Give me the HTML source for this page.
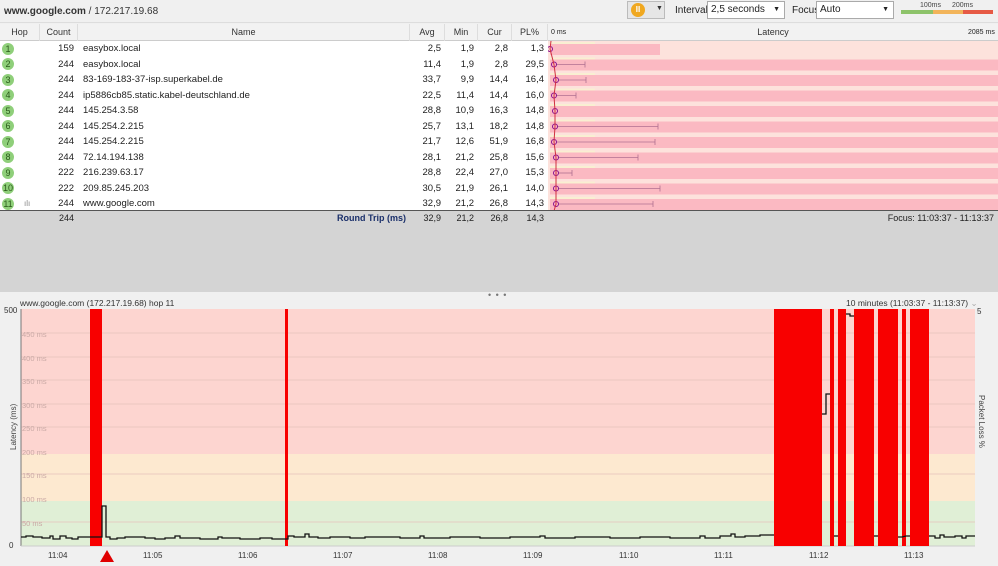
<!DOCTYPE html>
<html><head><meta charset="utf-8"><style>
*{box-sizing:border-box;margin:0;padding:0}
body{width:998px;height:566px;overflow:hidden;background:#f0f0f0;font-family:"Liberation Sans",sans-serif;font-size:9.5px;color:#222;position:relative}
.a{position:absolute}
.hdr{top:24px;height:17px;left:0;width:998px;background:#f2f2f2;border-bottom:1px solid #ccc;font-size:9px}
.hc{position:absolute;top:0;height:17px;line-height:17px;text-align:center;border-right:1px solid #ddd;color:#333}
.row{position:absolute;left:0;width:548px;height:15.5px;line-height:15.5px;background:#fff}
.row span{position:absolute;top:0}
.r{text-align:right}
.badge{position:absolute;left:2px;top:1.5px;width:12px;height:12px;border-radius:50%;background:#8fcf7a;color:#2a5a1a;font-size:9px;line-height:12px;text-align:center}
</style></head><body>
<div class="a" style="top:0;left:0;width:998px;height:23px;background:#f0f0f0;border-bottom:1px solid #ddd"></div>
<div class="a" style="top:6px;left:4px;font-size:10px;color:#333"><b>www.google.com</b> / 172.217.19.68</div>
<div class="a" style="top:1px;left:627px;width:38px;height:18px;border:1px solid #bbb;background:#e6e6e6"></div>
<div class="a" style="top:3px;left:631px;width:14px;height:14px;border-radius:50%;background:#f0a820;color:#fff;font-size:8px;line-height:14px;text-align:center;font-weight:bold">II</div>
<div class="a" style="top:5px;left:656px;font-size:7px;color:#333">▼</div>
<div class="a" style="top:5px;left:675px;font-size:10px">Interval</div>
<div class="a" style="top:1px;left:707px;width:78px;height:18px;border:1px solid #aaa;background:#fff;font-size:10px;line-height:16px;padding-left:3px">2,5 seconds<span style="position:absolute;right:4px;font-size:7px">▼</span></div>
<div class="a" style="top:5px;left:792px;font-size:10px">Focus</div>
<div class="a" style="top:1px;left:816px;width:78px;height:18px;border:1px solid #aaa;background:#fff;font-size:10px;line-height:16px;padding-left:3px">Auto<span style="position:absolute;right:4px;font-size:7px">▼</span></div>
<div class="a" style="top:2px;left:920px;font-size:7px;color:#444">100ms</div>
<div class="a" style="top:2px;left:952px;font-size:7px;color:#444">200ms</div>
<div class="a" style="top:10px;left:901px;width:32px;height:4px;background:#8dc36a"></div>
<div class="a" style="top:10px;left:933px;width:30px;height:4px;background:#f2b45a"></div>
<div class="a" style="top:10px;left:963px;width:30px;height:4px;background:#e65a45"></div>

<div class="a hdr">
<div class="hc" style="left:0;width:40px">Hop</div>
<div class="hc" style="left:40px;width:38px">Count</div>
<div class="hc" style="left:78px;width:332px">Name</div>
<div class="hc" style="left:410px;width:35px">Avg</div>
<div class="hc" style="left:445px;width:33px">Min</div>
<div class="hc" style="left:478px;width:34px">Cur</div>
<div class="hc" style="left:512px;width:36px">PL%</div>
<div class="hc" style="left:548px;width:450px;border:none">Latency</div>
<div class="a" style="left:551px;top:0;font-size:7px;line-height:17px">0 ms</div>
<div class="a" style="left:968px;top:0;font-size:7px;line-height:17px">2085 ms</div>
</div>

<div class="a" style="top:41px;left:548px;width:450px;height:170px;background:#fde2dc"></div>
<svg class="a" style="top:41px;left:548px" width="450" height="170">
<g id="rows"></g>
</svg>
<div id="tbl"></div>

<div class="a" style="top:210px;left:0;width:998px;height:1px;background:#555"></div>
<div class="a" style="top:211px;left:0;width:998px;height:81px;background:#d4d4d4"></div>
<div class="a" style="top:211px;left:0;width:998px;height:15px;line-height:14px;font-size:9px">
<span class="a r" style="left:40px;width:34px">244</span>
<span class="a r" style="left:300px;width:106px;color:#1a2f6a;font-weight:bold">Round Trip (ms)</span>
<span class="a r" style="left:410px;width:31px">32,9</span>
<span class="a r" style="left:445px;width:29px">21,2</span>
<span class="a r" style="left:478px;width:30px">26,8</span>
<span class="a r" style="left:512px;width:32px">14,3</span>
<span class="a r" style="left:800px;width:194px">Focus: 11:03:37 - 11:13:37</span>
</div>
<div class="a" style="top:290px;left:488px;font-size:9px;color:#777;letter-spacing:1px">• • •</div>
<div class="a" style="top:298px;left:20px;font-size:8.5px;color:#333">www.google.com (172.217.19.68) hop 11</div>
<div class="a" style="top:298px;left:846px;font-size:8.5px;color:#333">10 minutes (11:03:37 - 11:13:37) <span style="color:#aaa">⌄</span></div>

<svg class="a" style="top:300px;left:0" width="998" height="266">
<rect x="21" y="9" width="954" height="145" fill="#fdd5d0"/>
<rect x="21" y="154" width="954" height="47" fill="#fde9d0"/>
<rect x="21" y="201" width="954" height="45" fill="#e0efd6"/>
<g stroke="#e6c0bc" stroke-width="0.7">
<line x1="21" x2="975" y1="33" y2="33"/><line x1="21" x2="975" y1="57" y2="57"/><line x1="21" x2="975" y1="80" y2="80"/><line x1="21" x2="975" y1="104" y2="104"/><line x1="21" x2="975" y1="127" y2="127"/><line x1="21" x2="975" y1="174" y2="174"/><line x1="21" x2="975" y1="222" y2="222"/></g>
<g font-size="7.5" fill="#c9a9a5" font-family="Liberation Sans">
<text x="22" y="37">450 ms</text><text x="22" y="61">400 ms</text><text x="22" y="84">350 ms</text><text x="22" y="108">300 ms</text><text x="22" y="131">250 ms</text><text x="22" y="155">200 ms</text><text x="22" y="178">150 ms</text><text x="22" y="202">100 ms</text><text x="22" y="226">50 ms</text></g>
<line x1="21" y1="9" x2="21" y2="246" stroke="#777"/>
<line x1="21" y1="246" x2="975" y2="246" stroke="#ccc"/>
<text x="4" y="13" font-size="8" fill="#333" font-family="Liberation Sans">500</text>
<text x="9" y="248" font-size="8" fill="#333" font-family="Liberation Sans">0</text>
<text x="977" y="14" font-size="8" fill="#333" font-family="Liberation Sans">5</text>
<text transform="translate(16,150) rotate(-90)" font-size="8" fill="#444" font-family="Liberation Sans">Latency (ms)</text>
<text transform="translate(979,95) rotate(90)" font-size="8" fill="#444" font-family="Liberation Sans">Packet Loss %</text>
<g fill="#f80000">
<rect x="90" y="9" width="12" height="237"/><rect x="285" y="9" width="3" height="237"/>
<rect x="774" y="9" width="48" height="237"/><rect x="830" y="9" width="4" height="237"/><rect x="838" y="9" width="8" height="237"/><rect x="854" y="9" width="20" height="237"/><rect x="878" y="9" width="20" height="237"/><rect x="902" y="9" width="4" height="237"/><rect x="910" y="9" width="19" height="237"/>
</g>
<polyline fill="none" stroke="#111" stroke-width="1.3" points="21,237 26,237 26,236 33,236 33,237 42,237 42,238 50,238 50,236 53,236 53,239 60,239 60,236 66,236 66,238 72,238 72,239 78,239 78,237 90,237 102,237 102,206 106,206 106,237 110,237 110,239 117,239 117,238 125,238 125,237 145,237 145,238 155,238 155,239 165,239 165,238 175,238 175,236 180,236 180,238 200,238 200,239 218,239 218,237 222,237 222,238 240,238 240,239 260,239 260,238 272,238 272,239 285,239 288,239 288,236 294,236 294,237 305,237 305,234 309,234 309,237 318,237 318,238 330,238 330,237 350,237 350,238 365,238 365,237 400,237 400,238 420,238 420,236 424,236 424,238 450,238 450,237 480,237 480,238 510,238 510,237 540,237 540,236 545,236 545,238 575,238 575,237 610,237 610,238 640,238 640,237 670,237 670,238 700,238 700,236 705,236 705,238 720,238 720,236 731,236 731,234 735,234 735,237 745,237 745,236 760,236 760,235 774,235 774,235"/>
<polyline fill="none" stroke="#111" stroke-width="1.3" points="822,114 826,114 826,94 830,94"/>
<polyline fill="none" stroke="#111" stroke-width="1.3" points="846,14 850,14 850,16 854,16"/>
<polyline fill="none" stroke="#111" stroke-width="1.3" points="834,236 838,236"/>
<polyline fill="none" stroke="#111" stroke-width="1.3" points="874,236 878,236"/>
<polyline fill="none" stroke="#111" stroke-width="1.3" points="898,237 902,237 906,236 910,236"/>
<polyline fill="none" stroke="#111" stroke-width="1.3" points="929,236 935,236 935,238 940,238 940,235 944,235 944,237 955,237 955,236 962,236 962,238 966,238 966,236 975,236"/>
<g font-size="8" fill="#333" font-family="Liberation Sans">
<text x="48" y="258">11:04</text><text x="143" y="258">11:05</text><text x="238" y="258">11:06</text><text x="333" y="258">11:07</text><text x="428" y="258">11:08</text><text x="523" y="258">11:09</text><text x="619" y="258">11:10</text><text x="714" y="258">11:11</text><text x="809" y="258">11:12</text><text x="904" y="258">11:13</text></g>
<polygon points="100,262 107,250 114,262" fill="#e00000"/>
</svg>

<script>
var d=[[1,159,"easybox.local","2,5","1,9","2,8","1,3",0,0],
[2,244,"easybox.local","11,4","1,9","2,8","29,5",4,37],
[3,244,"83-169-183-37-isp.superkabel.de","33,7","9,9","14,4","16,4",6,38],
[4,244,"ip5886cb85.static.kabel-deutschland.de","22,5","11,4","14,4","16,0",4,28],
[5,244,"145.254.3.58","28,8","10,9","16,3","14,8",5,0],
[6,244,"145.254.2.215","25,7","13,1","18,2","14,8",5,110],
[7,244,"145.254.2.215","21,7","12,6","51,9","16,8",4,107],
[8,244,"72.14.194.138","28,1","21,2","25,8","15,6",6,90],
[9,222,"216.239.63.17","28,8","22,4","27,0","15,3",6,24],
[10,222,"209.85.245.203","30,5","21,9","26,1","14,0",6,112],
[11,244,"www.google.com","32,9","21,2","26,8","14,3",6,105]];
var h="",s="";
d.forEach(function(r,i){var y=41+i*15.5;
h+='<div class="row" style="top:'+y+'px"><div class="badge">'+r[0]+'</div>'+(i==10?'<span style="left:24px;color:#888;font-size:8px">ılı</span>':'')+
'<span class="r" style="left:40px;width:34px">'+r[1]+'</span><span style="left:83px">'+r[2]+'</span><span class="r" style="left:410px;width:31px">'+r[3]+'</span><span class="r" style="left:445px;width:29px">'+r[4]+'</span><span class="r" style="left:478px;width:30px">'+r[5]+'</span><span class="r" style="left:512px;width:32px">'+r[6]+'</span></div>';
var yy=i*15.5;
s+='<rect x="2" y="'+(yy+1)+'" width="45" height="4" fill="#f9efd2"/>';
s+='<rect x="2" y="'+(yy+3)+'" width="'+(i==0?110:448)+'" height="11" fill="#fbb9c2"/>';
if(r[8])s+='<line x1="'+(r[7]+4)+'" x2="'+r[8]+'" y1="'+(yy+8)+'" y2="'+(yy+8)+'" stroke="#b07090" stroke-width="0.8"/><line x1="'+r[8]+'" x2="'+r[8]+'" y1="'+(yy+5)+'" y2="'+(yy+11)+'" stroke="#b07090" stroke-width="0.8"/>';
s+='<circle cx="'+(r[7]+2)+'" cy="'+(yy+8)+'" r="2.5" fill="none" stroke="#8a1090" stroke-width="1"/>';
});
document.getElementById("tbl").innerHTML=h;
var pts=d.map(function(r,i){return (r[7]+2)+","+(i*15.5+8)}).join(" ");
s+='<polyline points="3,0 '+pts+' 6,170" fill="none" stroke="#d03040" stroke-width="1"/>';
document.getElementById("rows").innerHTML=s;
</script>
</body></html>
